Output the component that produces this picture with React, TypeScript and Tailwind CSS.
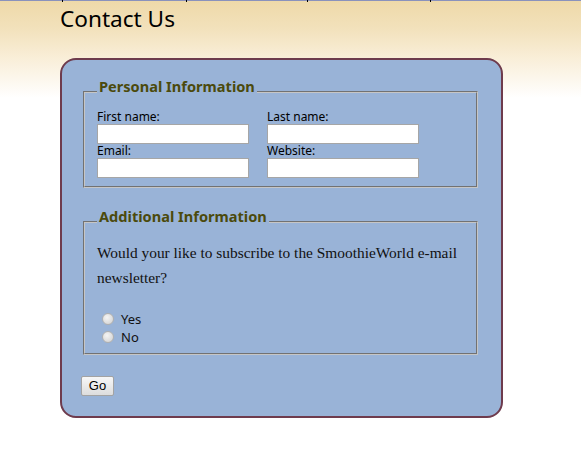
import React from "react";

function Field({ label }: { label: string }) {
  return (
    <div className="flex flex-col">
      <label className="block text-[12px] leading-[14px] text-black">{label}</label>
      <input
        type="text"
        className="block h-[20px] w-[152px] border border-[#a6a6a6] bg-white outline-none"
      />
    </div>
  );
}

function Radio({ label }: { label: string }) {
  return (
    <div className="flex h-[18px] items-center">
      <span className="ml-[5px] block h-[12px] w-[12px] rounded-full border border-[#b0b0b0] bg-[radial-gradient(circle_at_40%_35%,#f4f4f4,#cfcfcf)]" />
      <span className="ml-[7px] text-[13px] leading-[18px] text-[#111]">{label}</span>
    </div>
  );
}

export default function App() {
  return (
    <div className="min-h-[465px] w-full bg-[linear-gradient(to_bottom,#eed9a8_0px,#f2e1bb_28px,#f9eed8_58px,#ffffff_98px)] font-['Noto_Sans',sans-serif]">
      <div className="relative h-[1px] bg-[#8a92bc]">
        <span className="absolute left-[62px] top-0 h-[2px] w-[1px] bg-black" />
        <span className="absolute left-[186px] top-0 h-[2px] w-[1px] bg-black" />
        <span className="absolute left-[307px] top-0 h-[2px] w-[1px] bg-black" />
        <span className="absolute left-[430px] top-0 h-[2px] w-[1px] bg-black" />
      </div>
      <h1 className="ml-[60px] mt-[3px] text-[22.6px] font-normal leading-[30px] text-black">Contact Us</h1>

      <form
        className="ml-[60px] mt-[24px] w-[443px] rounded-[16px] border-2 border-[#6e3b4d] bg-[#99b3d7] pb-[20px] pt-[18px]"
        onSubmit={(e) => e.preventDefault()}
      >
        <fieldset className="ml-[21px] w-[395px] border-2 border-[#c6c6c6] px-[12px] pb-[8px] pt-[4px] [border-style:groove]">
          <legend className="px-[2px] pb-[12px] text-[14.6px] font-bold leading-[16px] text-[#4b4a0c]">
            Personal Information
          </legend>
          <div className="grid grid-cols-[170px_152px]">
            <Field label="First name:" />
            <Field label="Last name:" />
            <Field label="Email:" />
            <Field label="Website:" />
          </div>
        </fieldset>

        <fieldset className="ml-[21px] mt-[20px] w-[395px] border-2 border-[#c6c6c6] px-[12px] pb-[7px] pt-[3px] [border-style:groove]">
          <legend className="px-[2px] pb-[12px] text-[14.6px] font-bold leading-[16px] text-[#4b4a0c]">
            Additional Information
          </legend>
          <p className="pt-[1px] font-['Liberation_Serif',serif] text-[15.4px] leading-[25px] text-[#111]">
            Would your like to subscribe to the SmoothieWorld e-mail newsletter?
          </p>
          <div className="mt-[20px]">
            <Radio label="Yes" />
            <Radio label="No" />
          </div>
        </fieldset>

        <button
          type="submit"
          className="ml-[19px] mt-[21px] block h-[20px] w-[33px] rounded-[2px] border border-[#a3a3a3] bg-[linear-gradient(#f7f7f7,#dddddd)] font-['Liberation_Sans',sans-serif] text-[13px] leading-[18px] text-black"
        >
          Go
        </button>
      </form>
    </div>
  );
}
